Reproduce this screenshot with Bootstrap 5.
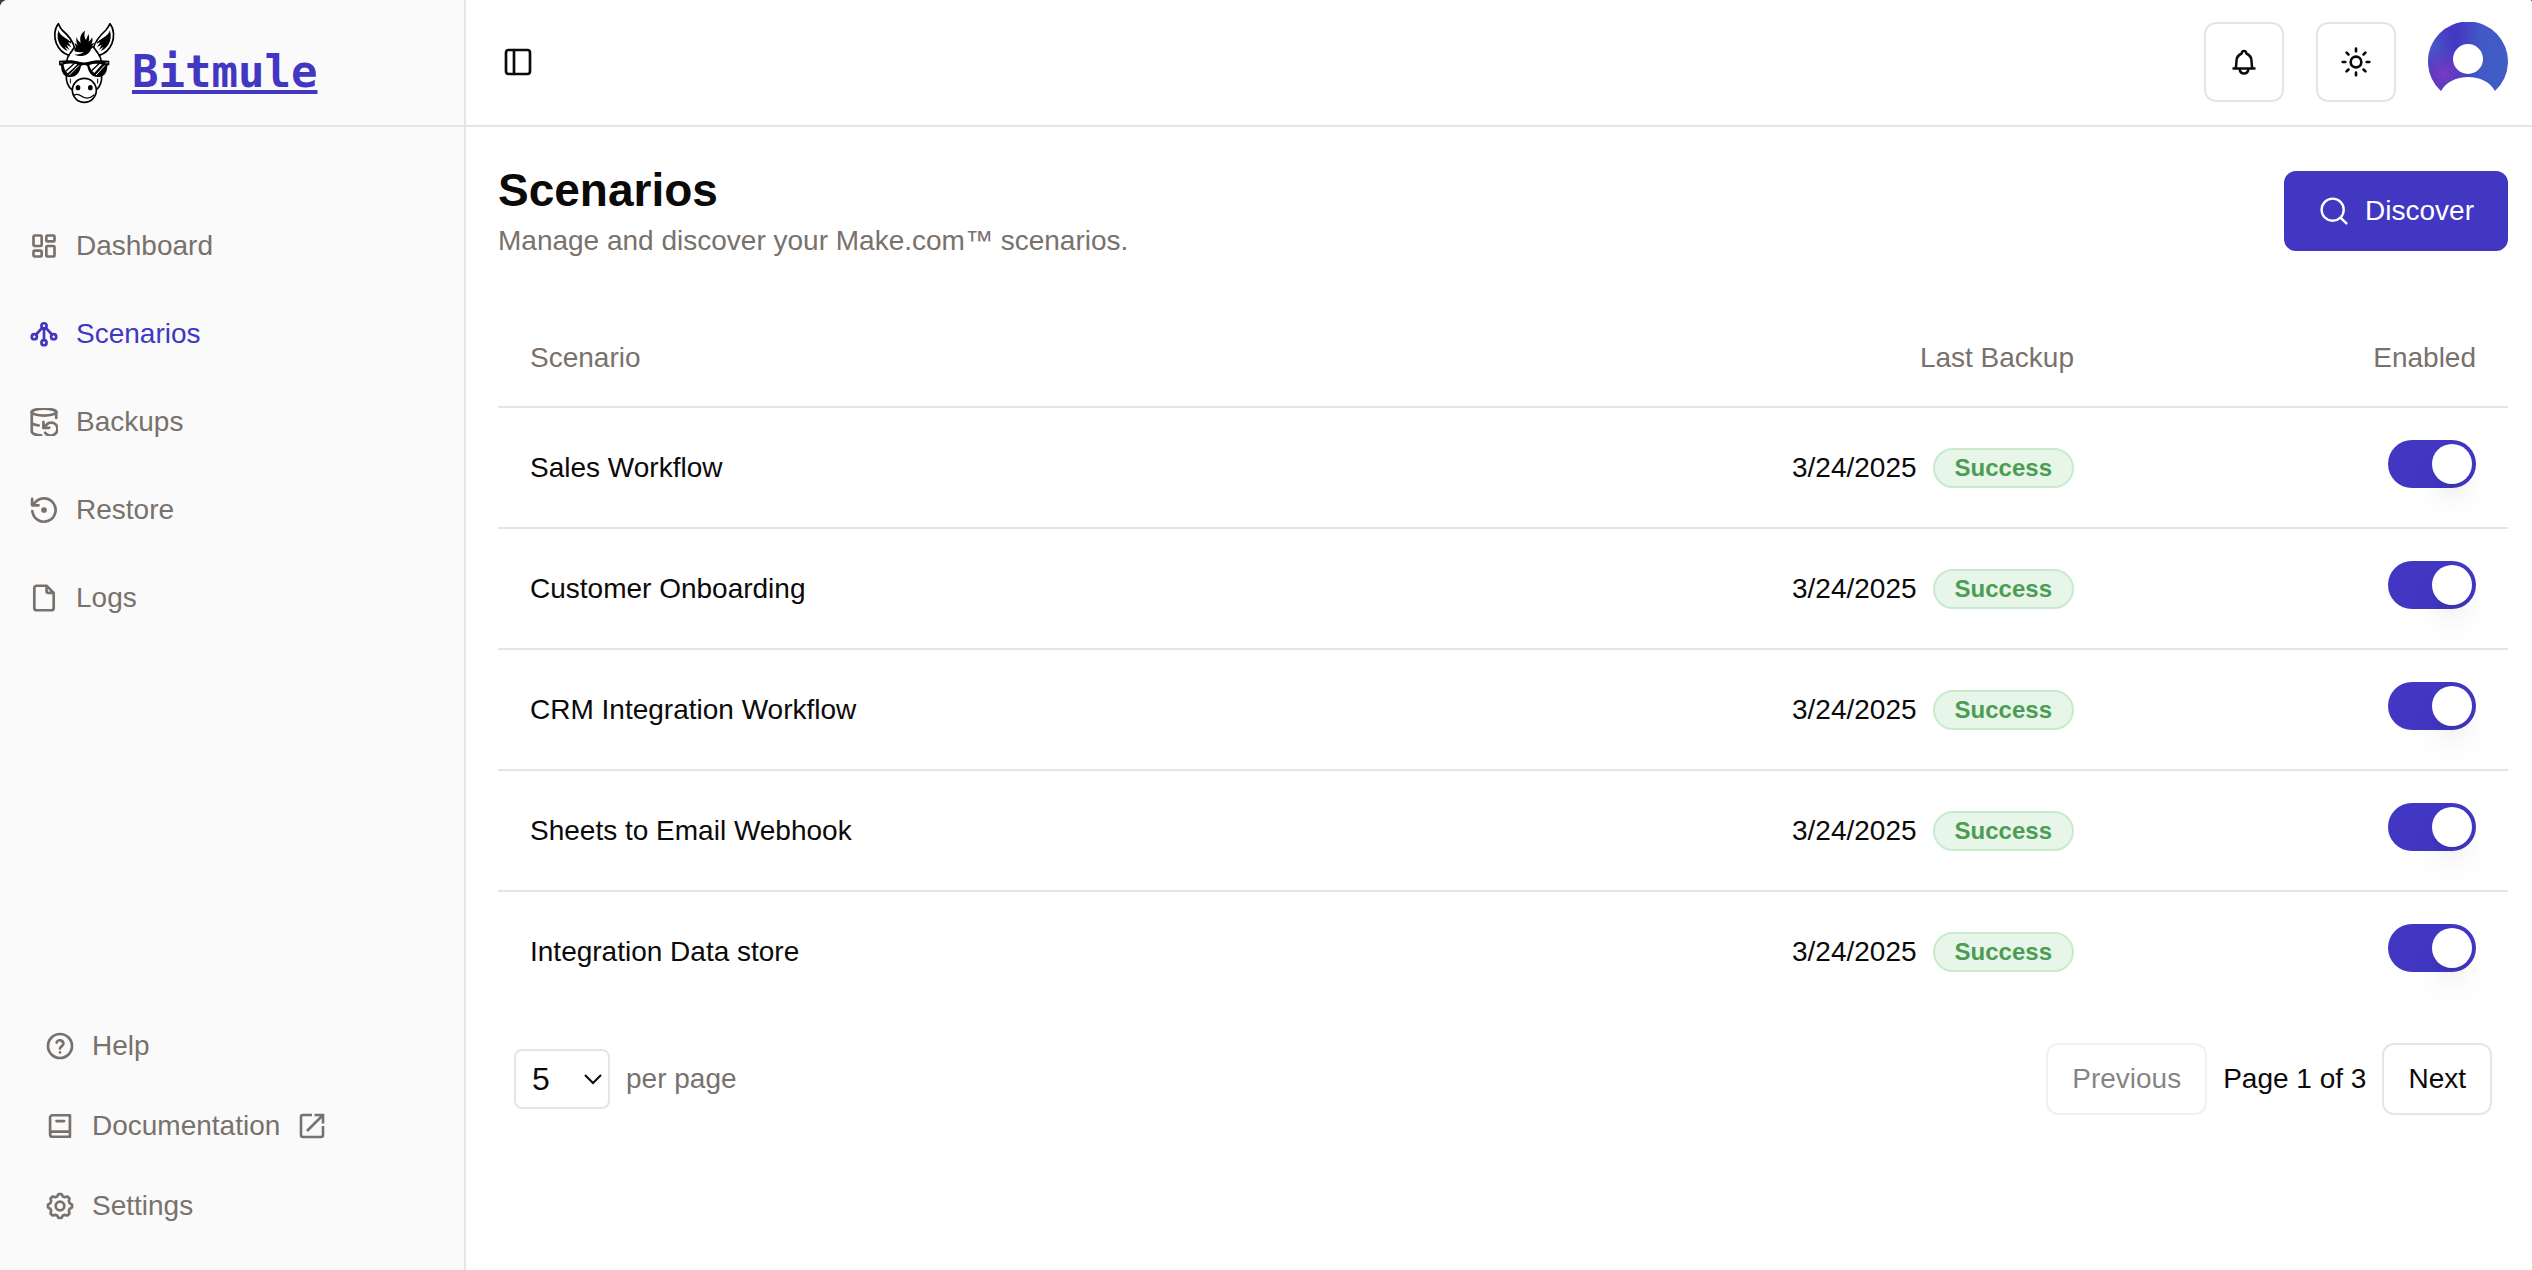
<!DOCTYPE html>
<html lang="en">
<head>
<meta charset="utf-8">
<meta name="viewport" content="width=device-width, initial-scale=1">
<title>Scenarios – Bitmule</title>
<link href="https://cdn.jsdelivr.net/npm/bootstrap@5.3.0/dist/css/bootstrap.min.css" rel="stylesheet">
<style>
  :root { --brand: #4137c2; --ink: #0c0a09; --soft: #78716c; --line: #e5e5e5; }
  body { font-family: "Liberation Sans", Arial, sans-serif; font-size: 28px; line-height: 40px; color: var(--ink); background: #3a3a3a; }
  .shell { min-height: 100vh; background: #fff; border-radius: 8px 2px 0 0; overflow: hidden; }
  svg { fill: none; stroke: currentColor; stroke-width: 2; stroke-linecap: round; stroke-linejoin: round; flex: none; }
  .ic { width: 28px; height: 28px; stroke-width: 2.3; }
  .ic-lg { width: 32px; height: 32px; }

  .side { width: 466px; background: #fafafa; border-right: 2px solid var(--line); }
  .bar { height: 127px; padding-bottom: 1px; border-bottom: 2px solid var(--line); }
  .brand { color: var(--brand); font: bold 44px/76px "DejaVu Sans Mono", monospace; gap: 8px; padding-left: 40px; text-decoration: none; }
  .brand span { text-decoration: underline; text-decoration-thickness: 4px; text-underline-offset: 3px; }
  .mule { width: 84px; height: 95px; color: #000; }
  .side .nav-link { color: var(--soft); gap: 18px; height: 88px; padding: 0 30px; }
  .side .nav-link.active { color: var(--brand); }
  .side-main { padding-top: 75px; }
  .side-foot { padding-bottom: 24px; }
  .side-foot .nav-link { height: 80px; padding: 0 46px; }

  .top-actions { gap: 32px; }
  .main-pad { padding-left: 32px; padding-right: 24px; }
  .btn { --bs-btn-font-size: 28px; --bs-btn-line-height: 40px; --bs-btn-border-width: 2px; --bs-btn-border-radius: 12px; --bs-btn-color: var(--ink); --bs-btn-hover-color: var(--ink); }
  .btn-line { --bs-btn-border-color: var(--line); --bs-btn-hover-border-color: var(--line); --bs-btn-hover-bg: #f5f5f5; --bs-btn-bg: #fff; --bs-btn-disabled-border-color: var(--line); --bs-btn-disabled-color: var(--ink); --bs-btn-disabled-opacity: .5; }
  .btn-sq { width: 80px; height: 80px; }
  .btn-pager { padding: 14px 24px; }
  .btn-brand { --bs-btn-bg: var(--brand); --bs-btn-border-color: var(--brand); --bs-btn-color: #fff; --bs-btn-hover-bg: #362da8; --bs-btn-hover-color: #fff; gap: 15px; padding: 18px 32px; }
  .face { width: 80px; height: 80px; }

  .page-head { padding-top: 33px; margin-bottom: 48px; }
  .page-head h1 { font-size: 46px; line-height: 60px; font-weight: 700; }
  .page-head p { line-height: 42px; }
  .soft { color: var(--soft); }

  .grid-table { --bs-table-bg: transparent; --bs-table-color: var(--ink); color: var(--ink); border-color: var(--line); border-collapse: separate; border-spacing: 0; }
  .grid-table th { height: 98px; padding: 0 32px; font-weight: 400; color: var(--soft); vertical-align: middle; border-bottom: 2px solid var(--line); }
  .grid-table td { height: 121px; padding: 0 32px; border-bottom: 2px solid var(--line); }
  .grid-table tbody tr:last-child td { border-bottom: 0; height: 119px; }
  .grid-table td.cell-switch { vertical-align: top; padding-top: 32px; }
  .pill { font-size: 24px; line-height: 36px; font-weight: 700; color: #4a9d52; background: #e8f5e9; border: 2px solid #c8ebcc; border-radius: 20px; padding: 0 20px; }
  .form-check-input.toggle { width: 88px; height: 48px; margin: 0; padding: 4px; border: 0; border-radius: 24px; background: #d6d3d1; display: inline-block; vertical-align: top; }
  .form-check-input.toggle::before { content: ""; display: block; width: 40px; height: 40px; border-radius: 50%; background: #fff; box-shadow: 0 20px 30px -6px rgba(0,0,0,.1), 0 8px 12px -8px rgba(0,0,0,.1); }
  .form-check-input.toggle:checked { background: var(--brand); }
  .form-check-input.toggle:checked::before { margin-left: 40px; }

  .pager { padding: 32px 16px; gap: 16px; }
  .size-select { width: 96px; height: 60px; padding: 0 40px 0 16px; font-size: 32px; line-height: 40px; color: var(--ink); border: 2px solid var(--line); border-radius: 8px; background-color: #fff; background-position: right 5px center; background-size: 20px 20px;
    background-image: url("data:image/svg+xml,%3csvg xmlns='http://www.w3.org/2000/svg' viewBox='0 0 20 20'%3e%3cpath fill='none' stroke='%230c0a09' stroke-width='2' d='M2 6l8 8 8-8'/%3e%3c/svg%3e"); }
</style>
</head>
<body>
<div class="shell d-flex">
  <aside class="side d-flex flex-column flex-shrink-0">
    <div class="bar d-flex align-items-center">
      <a class="brand d-flex align-items-end" href="#">
        <svg class="mule" viewBox="0 0 252 285" aria-hidden="true">
          <g stroke-width="5">
            <path fill="#fff" d="M55 26C42 42 42 68 49 85c8 19 22 31 38 36l16-24C98 74 80 57 66 45 61 39 58 33 55 26z"/>
            <path fill="#fff" d="M210 26c13 16 13 42 6 59-8 19-22 31-38 36l-17-24c6-23 24-40 37-52 5-6 9-12 12-19z"/>
            <path fill="#fff" stroke="none" d="M88 119c-6 9-8 18-9 29v45c1 12 5 20 14 28 0 32 15 42 38 42s38-12 39-42c10-8 14-18 15-30v-43c-1-11-3-20-9-29-20-14-66-14-88 0z"/>
            <path d="M88 119c-5 6-7 12-8 19M176 119c5 6 7 12 8 19M79 182c-1 20 3 31 17 42M185 182c1 20-3 31-16 42"/>
            <path d="M91 192v12M173 192v12" stroke-width="3"/>
            <ellipse fill="#fff" cx="133" cy="226" rx="36" ry="36"/>
            <path d="M101 241c8-5 15-4 23 2 10 8 25 9 38-3" stroke-width="4"/>
          </g>
          <g fill="#000" stroke="none">
            <path d="M55 46c-4 16-3 30 5 43 6 9 13 15 23 19l-9-13 14 9-8-15 14 8-10-16 11 5C88 71 62 68 55 46z"/>
            <path d="M210 46c4 16 3 30-5 43-6 9-13 15-23 19l9-13-14 9 8-15-14 8 10-16-11 5c7-15 33-18 40-40z"/>
            <circle cx="83" cy="77" r="2"/><circle cx="91" cy="80" r="2"/><circle cx="180" cy="77" r="2"/><circle cx="174" cy="81" r="2"/>
            <path d="M104 109l-2-15 6 5-4-16 9 8c-5-10-5-17-3-25 2 9 6 14 12 17-4-16 1-28 13-36-3 12-2 20 3 28 2-5 5-10 7-18 3 8 3 15 1 23 5-4 9-8 10-14 3 9 1 15-2 21l10-4-8 11 9-1-12 9c-3 13-17 22-35 21-6 0-11-2-13-5 12 1 20-2 26-8-10 3-18 2-27-1z"/>
            <path d="M57 137l28-1c14 0 24 2 35 5 8 2 16 2 24 0 11-3 21-5 35-5l29 1v13l-6 2c-1 24-11 34-29 34-18 0-27-12-31-32-5-5-14-5-19 0-4 20-14 32-31 32-19 0-28-10-29-34l-6-2z"/>
            <ellipse cx="114" cy="218" rx="7" ry="8"/><ellipse cx="151" cy="218" rx="7" ry="8"/>
          </g>
          <g fill="#fff" stroke="none">
            <path d="M71 148c14-3 30-3 41 0l-12 12-17 15c-8-6-11-14-12-27z"/>
            <path d="M148 150c12-5 27-5 38-2l-23 26c-8-6-13-14-15-24z"/>
          </g>
          <path stroke="#000" stroke-width="4" d="M78 168l24-22M156 166l21-20"/>
          <path stroke="#fff" stroke-width="3" d="M88 180l28-28M169 179l25-27"/>
          <path stroke="#fff" stroke-width="2" d="M62 143l5 1M203 143l-5 1"/>
        </svg>
        <span>Bitmule</span>
      </a>
    </div>
    <nav class="side-main nav flex-column flex-nowrap" aria-label="Main">
      <a class="nav-link d-flex align-items-center" href="#">
        <svg class="ic" viewBox="0 0 24 24"><rect x="3" y="3" width="7" height="9" rx="1"/><rect x="14" y="3" width="7" height="5" rx="1"/><rect x="14" y="12" width="7" height="9" rx="1"/><rect x="3" y="16" width="7" height="5" rx="1"/></svg>
        Dashboard</a>
      <a class="nav-link active d-flex align-items-center" href="#" aria-current="page">
        <svg class="ic" viewBox="0 0 24 24"><circle cx="12" cy="5" r="2.2"/><circle cx="3.7" cy="14.3" r="2.2"/><circle cx="20.3" cy="14.3" r="2.2"/><circle cx="12" cy="19.4" r="2.2"/><path d="M12 7.2v10M10.4 6.8l-5.2 5.6M13.6 6.8l5.2 5.6"/></svg>
        Scenarios</a>
      <a class="nav-link d-flex align-items-center" href="#">
        <svg class="ic" viewBox="0 0 24 24"><ellipse cx="12" cy="3.500" rx="10.500" ry="3"/><path d="M1.500 12.500c1 1.500 3.500 2.300 6 2.500M22.500 8.500v-5M1.500 3.500v16.500c0 2 4 3.300 8 3.500M11.500 12v5h5"/><path d="M13 21.200a5.800 5.800 0 0 0 10.500-3.500 5.200 5.200 0 0 0-5.200-5.200c-1.600 0-3 .6-4 1.600L11.500 17"/></svg>
        Backups</a>
      <a class="nav-link d-flex align-items-center" href="#">
        <svg class="ic" viewBox="0 0 24 24"><path d="M2 13a10 10 0 1 0 1.800-6.800L2 8M1.800 2.500v5.500h5.500"/><circle cx="12" cy="12" r="1.300" fill="currentColor"/></svg>
        Restore</a>
      <a class="nav-link d-flex align-items-center" href="#">
        <svg class="ic" viewBox="0 0 24 24"><path d="M14.200 1.500H5.700a2 2 0 0 0-2 2v17a2 2 0 0 0 2 2h12.600a2 2 0 0 0 2-2V7.600zM14.200 1.500V6a1.600 1.600 0 0 0 1.600 1.600h4.500"/></svg>
        Logs</a>
    </nav>
    <nav class="side-foot nav flex-column flex-nowrap mt-auto" aria-label="Support">
      <a class="nav-link d-flex align-items-center" href="#">
        <svg class="ic" viewBox="0 0 24 24"><circle cx="12" cy="12" r="10.300"/><path d="M9.100 9a3 3 0 0 1 5.800 1c0 2-3 2.500-3 4.200M12 17.500h.01"/></svg>
        Help</a>
      <a class="nav-link d-flex align-items-center" href="#">
        <svg class="ic" viewBox="0 0 24 24"><path d="M20.500 21.200H5.500a2 2 0 0 1-2-2V4.800a2 2 0 0 1 2-2h15v14H5.500a2.200 2.200 0 0 0-2 2.200M20.500 16.800v4.400M9 7.800h6.500"/></svg>
        Documentation
        <svg class="ic" viewBox="0 0 28 28"><path stroke-width="2.600" stroke-linecap="butt" stroke-linejoin="miter" d="M14 3H5a2 2 0 0 0-2 2v18a2 2 0 0 0 2 2h18a2 2 0 0 0 2-2v-9M16.500 3H25v8.500M25 3L9 19"/></svg></a>
      <a class="nav-link d-flex align-items-center" href="#">
        <svg class="ic" viewBox="-12 -12 24 24"><circle r="3.700"/><path d="M-2.500-8.200L-1.200-10.300 1.200-10.300 2.500-8.200 4-7.600 6.400-8.100 8.100-6.400 7.600-4 8.200-2.500 10.300-1.200 10.300 1.200 8.200 2.500 7.600 4 8.100 6.400 6.400 8.100 4 7.600 2.500 8.200 1.200 10.300-1.200 10.300-2.500 8.200-4 7.600-6.400 8.100-8.100 6.400-7.600 4-8.200 2.500-10.300 1.200-10.300-1.200-8.200-2.500-7.600-4-8.100-6.400-6.400-8.100-4-7.600z"/></svg>
        Settings</a>
    </nav>
  </aside>

  <div class="flex-grow-1">
    <header class="bar main-pad d-flex align-items-center justify-content-between">
      <button type="button" class="btn border-0 p-1 d-flex" aria-label="Toggle sidebar">
        <svg class="ic-lg" viewBox="0 0 24 24"><rect x="3" y="3" width="18" height="18" rx="2"/><path d="M9 3v18"/></svg>
      </button>
      <div class="top-actions d-flex align-items-center">
        <button type="button" class="btn btn-line btn-sq d-flex align-items-center justify-content-center p-0" aria-label="Notifications">
          <svg class="ic-lg" viewBox="0 0 32 32"><path stroke-width="2.500" d="M5.500 22.500h21M7.500 22.500c.8-2 .9-4 .9-7 0-4 1.800-6.500 5.200-8 .2-1.600 1-2.500 2.400-2.500s2.200.9 2.400 2.500c3.400 1.500 5.200 4 5.200 8 0 3 .1 5 .9 7M11.500 23c.5 3 2.200 4.500 4.500 4.500s4-1.500 4.500-4.500"/></svg>
        </button>
        <button type="button" class="btn btn-line btn-sq d-flex align-items-center justify-content-center p-0" aria-label="Switch theme">
          <svg class="ic-lg" viewBox="0 0 24 24"><circle cx="12" cy="12" r="4"/><path d="M12 2v2M12 20v2M4.930 4.930l1.410 1.410M17.660 17.660l1.410 1.410M2 12h2M20 12h2M6.340 17.660l-1.410 1.410M19.070 4.930l-1.410 1.410"/></svg>
        </button>
        <button type="button" class="btn border-0 p-0 rounded-circle d-flex" aria-label="Account">
          <svg class="face" viewBox="0 0 80 80">
            <defs>
              <linearGradient id="sky" x1="0" y1="0" x2="1" y2="0"><stop offset=".35" stop-color="#4337c4"/><stop offset=".65" stop-color="#4258c6"/><stop offset="1" stop-color="#3f5fc4"/></linearGradient>
              <radialGradient id="glow" cx=".2" cy=".65" r=".32"><stop offset="0" stop-color="#7a3cc0"/><stop offset="1" stop-color="#7a3cc0" stop-opacity="0"/></radialGradient>
              <radialGradient id="edge" cx="0" cy=".3" r=".35"><stop offset="0" stop-color="#4a5cc8"/><stop offset="1" stop-color="#4a5cc8" stop-opacity="0"/></radialGradient>
              <clipPath id="disc"><path d="M13 69A40 40 0 1 1 67 69C62 60 52 55 40 55S18 60 13 69z"/></clipPath>
            </defs>
            <g stroke="none" clip-path="url(#disc)"><rect width="80" height="80" fill="url(#sky)"/><rect width="80" height="80" fill="url(#edge)"/><rect width="80" height="80" fill="url(#glow)"/></g>
            <circle stroke="none" cx="40" cy="37" r="15" fill="#fff"/>
          </svg>
        </button>
      </div>
    </header>

    <main class="main-pad">
      <div class="page-head d-flex align-items-center justify-content-between">
        <div>
          <h1 class="mb-0">Scenarios</h1>
          <p class="soft mb-0">Manage and discover your Make.com™ scenarios.</p>
        </div>
        <button type="button" class="btn btn-brand d-flex align-items-center">
          <svg class="ic-lg" viewBox="0 0 24 24"><path stroke-width="1.800" d="M19.300 11a8.300 8.300 0 1 1-16.600 0 8.300 8.300 0 0 1 16.600 0zM21.300 21.300l-4.400-4.400"/></svg>
          Discover
        </button>
      </div>

      <table class="table grid-table w-100 mb-0">
        <colgroup><col><col><col style="width:20%"></colgroup>
        <thead>
          <tr><th scope="col">Scenario</th><th scope="col" class="text-end">Last Backup</th><th scope="col" class="text-end">Enabled</th></tr>
        </thead>
        <tbody class="align-middle">
          <tr><td>Sales Workflow</td><td><div class="d-flex justify-content-end align-items-center gap-3">3/24/2025 <span class="pill">Success</span></div></td><td class="cell-switch text-end"><input class="form-check-input toggle" type="checkbox" role="switch" checked aria-label="Enable Sales Workflow"></td></tr>
          <tr><td>Customer Onboarding</td><td><div class="d-flex justify-content-end align-items-center gap-3">3/24/2025 <span class="pill">Success</span></div></td><td class="cell-switch text-end"><input class="form-check-input toggle" type="checkbox" role="switch" checked aria-label="Enable Customer Onboarding"></td></tr>
          <tr><td>CRM Integration Workflow</td><td><div class="d-flex justify-content-end align-items-center gap-3">3/24/2025 <span class="pill">Success</span></div></td><td class="cell-switch text-end"><input class="form-check-input toggle" type="checkbox" role="switch" checked aria-label="Enable CRM Integration Workflow"></td></tr>
          <tr><td>Sheets to Email Webhook</td><td><div class="d-flex justify-content-end align-items-center gap-3">3/24/2025 <span class="pill">Success</span></div></td><td class="cell-switch text-end"><input class="form-check-input toggle" type="checkbox" role="switch" checked aria-label="Enable Sheets to Email Webhook"></td></tr>
          <tr><td>Integration Data store</td><td><div class="d-flex justify-content-end align-items-center gap-3">3/24/2025 <span class="pill">Success</span></div></td><td class="cell-switch text-end"><input class="form-check-input toggle" type="checkbox" role="switch" checked aria-label="Enable Integration Data store"></td></tr>
        </tbody>
      </table>

      <div class="pager d-flex align-items-center">
        <select class="form-select size-select" id="page-size"><option selected>5</option><option>10</option><option>20</option></select>
        <label class="soft" for="page-size">per page</label>
        <button type="button" class="btn btn-line btn-pager ms-auto" disabled>Previous</button>
        <span>Page 1 of 3</span>
        <button type="button" class="btn btn-line btn-pager">Next</button>
      </div>
    </main>
  </div>
</div>
<script src="https://cdn.jsdelivr.net/npm/bootstrap@5.3.0/dist/js/bootstrap.bundle.min.js"></script>
</body>
</html>
